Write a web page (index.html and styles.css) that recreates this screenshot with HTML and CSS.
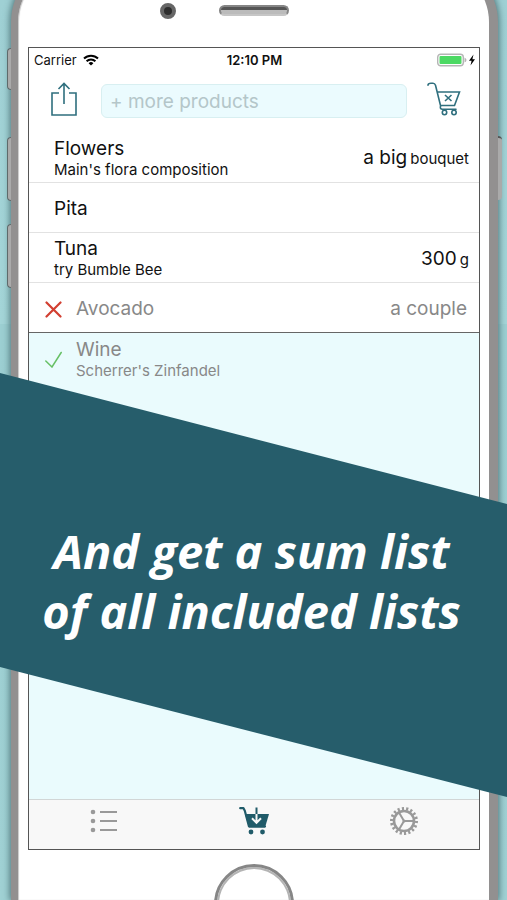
FILE: index.html
```html
<!DOCTYPE html>
<html lang="en">
<head>
<meta charset="utf-8">
<meta name="viewport" content="width=device-width, initial-scale=1">
<title>Shopping list</title>
<link rel="stylesheet" href="styles.css">
</head>
<body>
<div class="phone">
  <span class="side-key key-mute"></span>
  <span class="side-key key-up"></span>
  <span class="side-key key-down"></span>
  <span class="side-key key-power"></span>
  <div class="bezel-top">
    <span class="camera"></span>
    <span class="speaker"></span>
  </div>
  <div class="screen">
    <div class="status">
      <span class="carrier">Carrier
        <svg width="16" height="12" viewBox="0 0 16 12" fill="none" stroke="#000" stroke-width="2"><path d="M1 4.500a10 10 0 0 1 14 0M3.600 7.200a6.300 6.300 0 0 1 8.800 0"/><path d="M8 11.500 5.600 9.200a3.400 3.400 0 0 1 4.800 0z" fill="#000" stroke="none"/></svg>
      </span>
      <time class="clock">12:10 PM</time>
      <span class="power">
        <svg width="38" height="14" viewBox="0 0 38 14"><rect x=".7" y="1.200" width="25.600" height="11.600" rx="3" fill="#fff" stroke="#b5b5b5" stroke-width="1.400"/><rect x="2.500" y="3" width="22" height="8" rx="1" fill="#4cd964"/><path d="M27.500 4.500q2 1 2 2.500t-2 2.500z" fill="#b5b5b5"/><path d="M36.500 1.500 32 7.800h2.600L33.500 12.500 38 6.200h-2.600z" fill="#000"/></svg>
      </span>
    </div>
    <header class="toolbar">
      <button class="icon-button" type="button" aria-label="Share">
        <svg width="26" height="34" viewBox="0 0 26 34" fill="none" stroke="#2f6f7e" stroke-width="1.600"><path d="M8 11H1v22h24V11h-7M13 22V1.500M7.500 7 13 1.500 18.500 7"/></svg>
      </button>
      <input class="add" type="text" placeholder="+ more products" aria-label="Add more products">
      <button class="icon-button" type="button" aria-label="Clear cart">
        <svg width="34" height="34" viewBox="0 0 34 34" fill="none" stroke="#2f6f7e" stroke-width="1.600"><path d="M1 3.200C1 1.500 2.500 1.200 4 1.200h2c1.500 0 2 .6 2.500 2l5 20.300h14L32.500 10H10.300M14 23.500c-1.500 2-.5 3.700 1.500 3.700h13.500" stroke-linecap="round"/><path d="m18 13 6.500 6M24.500 13 18 19"/><circle cx="17.500" cy="30.500" r="2.200"/><circle cx="27" cy="30.500" r="2.200"/></svg>
      </button>
    </header>
    <ul class="items">
      <li class="item">
        <div class="label"><span class="name">Flowers</span><span class="note">Main's flora composition</span></div>
        <div class="amount">a big<small>bouquet</small></div>
      </li>
      <li class="item">
        <div class="label"><span class="name">Pita</span></div>
      </li>
      <li class="item">
        <div class="label"><span class="name">Tuna</span><span class="note">try Bumble Bee</span></div>
        <div class="amount">300<small>g</small></div>
      </li>
      <li class="item done">
        <svg class="mark" width="17" height="17" viewBox="0 0 17 17" fill="none" stroke="#d23f31" stroke-width="2.200" stroke-linecap="round"><path d="m1.500 1.500 14 14M15.500 1.500l-14 14"/></svg>
        <div class="label"><span class="name">Avocado</span></div>
        <div class="amount">a couple</div>
      </li>
      <li class="item done bought">
        <svg class="mark" width="17" height="17" viewBox="0 0 17 17" fill="none" stroke="#67c065" stroke-width="1.500" stroke-linecap="round"><path d="M.8 10 7 16 16.200 1.500"/></svg>
        <div class="label"><span class="name">Wine</span><span class="note">Scherrer's Zinfandel</span></div>
      </li>
    </ul>
    <nav class="tabs">
      <a href="#lists" aria-label="Lists">
        <svg width="28" height="24" viewBox="0 0 28 24" fill="#999"><circle cx="3" cy="3" r="2.300"/><circle cx="3" cy="12" r="2.300"/><circle cx="3" cy="21" r="2.300"/><path d="M10 2h17v2H10zM10 11h17v2H10zM10 20h17v2H10z"/></svg>
      </a>
      <a href="#cart" aria-label="Cart">
        <svg width="30" height="30" viewBox="0 0 30 30"><path d="M1.200 2.200h3.300l1.300 2.600 4.200 15.700h16" fill="none" stroke="#205b69" stroke-width="2.200" stroke-linecap="round" stroke-linejoin="round"/><path d="M6 8h24l-4 13.500H10z" fill="#205b69"/><path d="M17.500 7v9.500M13 12.300l4.500 4.500 4.500-4.500" fill="none" stroke="#f8f8f8" stroke-width="2"/><path d="M17.500 1.500V8" stroke="#205b69" stroke-width="2"/><circle cx="12" cy="26" r="2.400" fill="#205b69"/><circle cx="23.500" cy="26" r="2.400" fill="#205b69"/></svg>
      </a>
      <a href="#settings" aria-label="Settings">
        <svg width="30" height="30" viewBox="-15 -15 30 30" fill="none" stroke="#999"><circle r="10" stroke-width="2.600"/><circle r="12.500" stroke-width="3" pathLength="36" stroke-dasharray="1 1"/><path d="M0 0h9M0 0l-5-8.500M0 0l-5 8.500" stroke-width="2"/><circle r="1.500" fill="#999" stroke="none"/></svg>
      </a>
    </nav>
  </div>
  <div class="bezel-bottom"><span class="home"></span></div>
</div>
<div class="banner">
  <h1>And get a sum list<br>of all included lists</h1>
</div>
</body>
</html>
```
FILE: styles.css
```css
* { box-sizing: border-box; }

body {
  position: relative;
  display: flex;
  flex-direction: column;
  height: 100vh;
  margin: 0;
  overflow: hidden;
  background: linear-gradient(#9fd0d4, #a4d5d8 36%, #9ccfd2 36%, #a0d1d4);
  font-family: Inter, "Liberation Sans", sans-serif;
  color: #111;
}

.phone {
  position: relative;
  display: flex;
  flex: 1;
  flex-direction: column;
  margin: -40px 9px 0 11px;
  padding: 40px 9px 0 10px;
  border: solid #929090;
  border-width: 7px 9px 0 7px;
  border-radius: 62px 62px 0 0;
  background: #fff;
  box-shadow: 0 0 7px 1px #4c7377, inset 1px 0 1px #c8c8c8;
}

.side-key {
  position: absolute;
  left: -11px;
  width: 4px;
  height: 64px;
  border: 1px solid #5f6a6b;
  border-right: 0;
  border-radius: 4px 0 0 4px;
  background: #aaa;
}
.key-mute { top: 81px; height: 42px; }
.key-up { top: 170px; }
.key-down { top: 257px; }
.key-power {
  top: 169px;
  right: -13px;
  left: auto;
  border: 0;
  border-top: 2px solid #555;
  border-radius: 0 4px 4px 0;
}

.bezel-top {
  display: grid;
  grid-template-columns: 1fr 70px 1fr;
  flex: none;
  height: 40px;
  margin-top: -7px;
}
.camera {
  justify-self: end;
  width: 16px;
  height: 16px;
  margin: 3px 43px 0 0;
  border: 4px solid #666;
  border-radius: 50%;
  background: #2d2d2d;
}
.speaker {
  height: 11px;
  margin-top: 5px;
  border: 2px solid #858585;
  border-bottom-color: #c6c6c6;
  border-radius: 6px;
  background: linear-gradient(#555 50%, #bbb 50%);
}

.screen {
  display: flex;
  flex: 1;
  flex-direction: column;
  margin-top: 7px;
  border: 1px solid #555;
  background: #fff;
}

.status {
  display: grid;
  grid-template-columns: 1fr auto 1fr;
  align-items: center;
  height: 24px;
  padding: 0 4px 0 5px;
  font-size: 13px;
}
.carrier { display: flex; align-items: center; gap: 6px; }
.clock { font-weight: 600; }
.power { display: flex; justify-content: flex-end; }

.toolbar {
  display: flex;
  align-items: center;
  gap: 18px;
  height: 60px;
  padding: 0 16px 2px;
}
.icon-button {
  display: flex;
  justify-content: center;
  flex: none;
  width: 38px;
  padding: 0 0 4px;
  border: 0;
  background: none;
}
.add {
  flex: 1;
  min-width: 0;
  height: 34px;
  padding: 0 8px;
  border: 1px solid #d8eff1;
  border-radius: 6px;
  background: #ebfbfe;
  font: 19px Inter, "Liberation Sans", sans-serif;
}
.add::placeholder { color: #b4c6c9; opacity: 1; }

.items {
  flex: 1;
  margin: 0;
  padding: 0;
  background: #eafbfd;
  list-style: none;
}
.item {
  display: flex;
  align-items: center;
  height: 50px;
  padding: 3px 10px 0 25px;
  border-bottom: 1px solid #e2e2e2;
  background: #fff;
}
.item:first-child { height: 51px; }
.label { display: flex; flex: 1; flex-direction: column; }
.name { font-size: 19px; line-height: 22px; }
.note { font-size: 15px; line-height: 20px; }
.amount { font-size: 19px; line-height: 22px; }
.amount small { margin-left: 3px; font-size: 15px; }
.item.done { padding-left: 16px; border-bottom-color: #666; color: #888; }
.done .amount { padding-right: 2px; }
.mark { flex: none; margin-right: 14px; }
.item.bought { border-bottom: 0; background: none; }

.tabs {
  display: grid;
  grid-template-columns: repeat(3, 1fr);
  height: 50px;
  border-top: 1px solid #d2d6d6;
  background: #f8f8f8;
}
.tabs a {
  display: flex;
  align-items: center;
  justify-content: center;
  padding-bottom: 7px;
}

.bezel-bottom {
  display: flex;
  justify-content: center;
  height: 50px;
  overflow: hidden;
}
.home {
  flex: none;
  width: 80px;
  height: 80px;
  margin-top: 14px;
  border: 3px solid #868686;
  border-radius: 50%;
  box-shadow: inset 0 0 0 2px #b4b4b4;
}

.banner {
  position: absolute;
  top: 373px;
  right: 0;
  left: 0;
  display: flex;
  align-items: center;
  justify-content: center;
  height: 424px;
  padding: 0 4px 8px 0;
  background: #265d6b;
  clip-path: polygon(0 0, 100% 131px, 100% 100%, 0 294px);
}
h1 {
  margin: 0;
  color: #fff;
  font: italic 700 47px/60px "Open Sans", "Noto Sans", sans-serif;
  text-align: center;
  white-space: nowrap;
}
```
